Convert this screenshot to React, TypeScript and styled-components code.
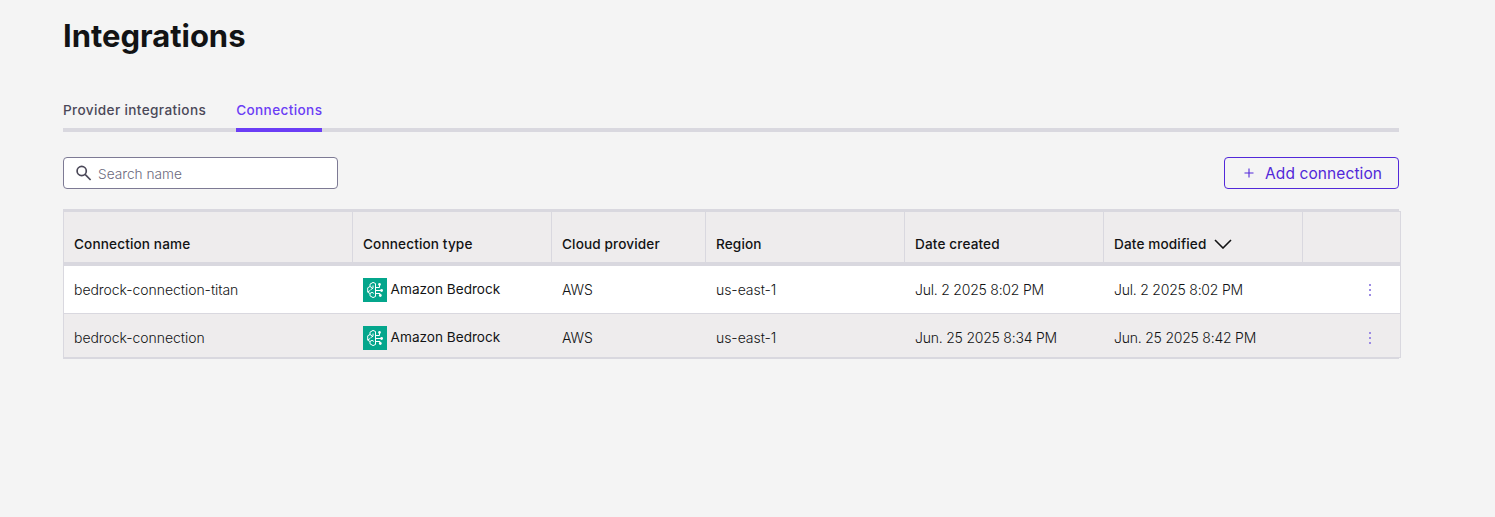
import React from "react";
import styled, { createGlobalStyle } from "styled-components";

const GlobalStyle = createGlobalStyle`
  *, *::before, *::after { box-sizing: border-box; }
  body { margin: 0; background: #f4f4f4; font-family: Inter, "Liberation Sans", sans-serif; color: #121314; }
  button, input { font-family: inherit; }
`;

const Page = styled.main`
  width: 1336px;
  margin-left: 63px;
  padding-top: 16px;
`;

const Title = styled.h1`
  margin: 0;
  font-size: 31px;
  line-height: 40px;
  font-weight: 700;
  letter-spacing: -0.02px;
`;

const Tabs = styled.nav`
  display: flex;
  gap: 30px;
  height: 32px;
  margin-top: 44px;
  box-shadow: inset 0 -4px #d9d8df;
`;

const Tab = styled.button<{ $active?: boolean }>`
  height: 32px;
  padding: 0 0 12px;
  border: 0;
  border-bottom: 4px solid ${(p) => (p.$active ? "#6b3df5" : "transparent")};
  background: none;
  color: ${(p) => (p.$active ? "#6b3df5" : "#4b4858")};
  font-size: 13.6px;
  line-height: 20px;
  font-weight: 500;
  letter-spacing: 0.37px;
  white-space: nowrap;
`;

const Toolbar = styled.div`
  display: flex;
  justify-content: space-between;
  margin-top: 25px;
`;

const Search = styled.label`
  display: flex;
  align-items: center;
  width: 275px;
  height: 32px;
  padding-left: 11px;
  border: 1px solid #7d7a94;
  border-radius: 4px;
  background: #fff;
`;

const SearchInput = styled.input`
  flex: 1;
  min-width: 0;
  height: 28px;
  margin-left: 5px;
  padding: 1px 0 0;
  border: 0;
  outline: 0;
  background: none;
  font-size: 13.7px;
  font-weight: 300;
  &::placeholder { color: #6b687c; opacity: 1; }
`;

const AddButton = styled.button`
  display: flex;
  align-items: center;
  width: 175px;
  height: 32px;
  padding: 0 0 0 19px;
  border: 1px solid #5228d9;
  border-radius: 4px;
  background: none;
  color: #5228d9;
  font-size: 15.5px;
  line-height: 24px;
  letter-spacing: 0.1px;
  white-space: nowrap;
  svg { margin-right: 11px; }
`;

const AddLabel = styled.span`
  padding-top: 2px;
`;

const TableFrame = styled.div`
  margin-top: 20px;
  border-top: 2px solid #d9d8df;
  border-bottom: 1px solid #d9d8df;
`;

const Table = styled.div`
  width: 1338px;
  height: 147px;
  border: 1px solid #d9d8df;
`;

const columns = "289px 199px 154px 199px 199px 199px 1fr";

const HeaderRow = styled.div`
  display: grid;
  grid-template-columns: ${columns};
  height: 54px;
  border-bottom: 4px solid #d9d8df;
  background: #eeeced;
`;

const HeaderCell = styled.div`
  display: flex;
  align-items: center;
  padding: 13px 10px 0;
  border-right: 1px solid #d9d8df;
  font-size: 13.6px;
  line-height: 20px;
  font-weight: 500;
  letter-spacing: 0.13px;
  white-space: nowrap;
  &:last-child { border-right: 0; }
  svg { margin-left: 7.6px; }
`;

const Row = styled.div<{ $shaded?: boolean }>`
  display: grid;
  grid-template-columns: ${columns};
  height: ${(p) => (p.$shaded ? 43 : 48)}px;
  border-bottom: ${(p) => (p.$shaded ? 0 : 1)}px solid #d9d8df;
  background: ${(p) => (p.$shaded ? "#eeeced" : "#fff")};
`;

const Cell = styled.div`
  height: 48px;
  padding: 0 10px;
  font-size: 14px;
  line-height: 48px;
  font-weight: 300;
  letter-spacing: -0.05px;
  white-space: nowrap;
`;

const DateCell = styled(Cell)`
  letter-spacing: -0.22px;
`;

const TypeCell = styled(Cell)`
  display: flex;
  align-items: center;
  font-size: 13.6px;
  font-weight: 400;
  letter-spacing: 0;
`;

const TypeName = styled.span`
  margin-left: 3.6px;
  padding-bottom: 2px;
  line-height: 20px;
`;

const MenuCell = styled.div`
  display: flex;
  justify-content: flex-end;
  height: 48px;
  padding-right: 24px;
`;

const MenuButton = styled.button`
  display: flex;
  align-items: center;
  justify-content: center;
  width: 12px;
  height: 48px;
  padding: 0;
  border: 0;
  background: none;
`;

const SearchIcon = () => (
  <svg width="18" height="18" viewBox="0 0 18 18" fill="none" stroke="#4b4858" strokeWidth="1.7">
    <circle cx="6.7" cy="7" r="4.6" />
    <path d="M10.1 10.4 15.6 16" />
  </svg>
);

const PlusIcon = () => (
  <svg width="10" height="10" viewBox="0 0 10 10" stroke="#5228d9" strokeWidth="1.1">
    <path d="M5 .5v9M.5 5h9" />
  </svg>
);

const SortIcon = () => (
  <svg width="18" height="10" viewBox="0 0 18 10" fill="none" stroke="#121314" strokeWidth="1.6">
    <path d="M1 1 9 9 17 1" />
  </svg>
);

const BedrockIcon = () => (
  <svg width="24" height="24" viewBox="0 0 24 24" fill="none" stroke="#fff" strokeWidth="1">
    <path fill="#04a68c" stroke="none" d="M0 0h24v24H0z" />
    <path d="M12.5 5.5v13L10 19.6l-3-1.8v-2.3l-2.3-1.3V9.8L7 8.5V6.2l3-1.8 2.5 1.1M7 8.5l2.2 1.3M10 7.5v2.7l-2.4 1.5M4.8 13.8l2.4-1.3M7 15.5l2-1.2 1.8 1.1" />
    <path d="M12.5 9.5h4V7M12.5 12.5h5.5M12.5 15.5h4.5v1.5" />
    <circle cx="16.5" cy="6.4" r="1.3" fill="#fff" stroke="none" />
    <circle cx="18.6" cy="12.5" r="1.4" fill="#fff" stroke="none" />
    <circle cx="17.3" cy="17.5" r="1.4" fill="#fff" stroke="none" />
  </svg>
);

const DotsIcon = () => (
  <svg width="2" height="12" viewBox="0 0 2 12" fill="#9d8ce4">
    <path d="M0 0h2v2H0zM0 5h2v2H0zM0 10h2v2H0z" />
  </svg>
);

const connections = [
  { name: "bedrock-connection-titan", created: "Jul. 2 2025 8:02 PM", modified: "Jul. 2 2025 8:02 PM" },
  { name: "bedrock-connection", created: "Jun. 25 2025 8:34 PM", modified: "Jun. 25 2025 8:42 PM" },
];

export default function App() {
  return (
    <>
      <GlobalStyle />
      <Page>
        <Title>Integrations</Title>
        <Tabs>
          <Tab>Provider integrations</Tab>
          <Tab $active>Connections</Tab>
        </Tabs>
        <Toolbar>
          <Search>
            <SearchIcon />
            <SearchInput placeholder="Search name" />
          </Search>
          <AddButton>
            <PlusIcon />
            <AddLabel>Add connection</AddLabel>
          </AddButton>
        </Toolbar>
        <TableFrame>
          <Table>
            <HeaderRow>
              <HeaderCell>Connection name</HeaderCell>
              <HeaderCell>Connection type</HeaderCell>
              <HeaderCell>Cloud provider</HeaderCell>
              <HeaderCell>Region</HeaderCell>
              <HeaderCell>Date created</HeaderCell>
              <HeaderCell>
                Date modified
                <SortIcon />
              </HeaderCell>
              <HeaderCell />
            </HeaderRow>
            {connections.map((c, i) => (
              <Row key={c.name} $shaded={i % 2 === 1}>
                <Cell>{c.name}</Cell>
                <TypeCell>
                  <BedrockIcon />
                  <TypeName>Amazon Bedrock</TypeName>
                </TypeCell>
                <Cell>AWS</Cell>
                <Cell>us-east-1</Cell>
                <DateCell>{c.created}</DateCell>
                <DateCell>{c.modified}</DateCell>
                <MenuCell>
                  <MenuButton aria-label="Connection actions">
                    <DotsIcon />
                  </MenuButton>
                </MenuCell>
              </Row>
            ))}
          </Table>
        </TableFrame>
      </Page>
    </>
  );
}
